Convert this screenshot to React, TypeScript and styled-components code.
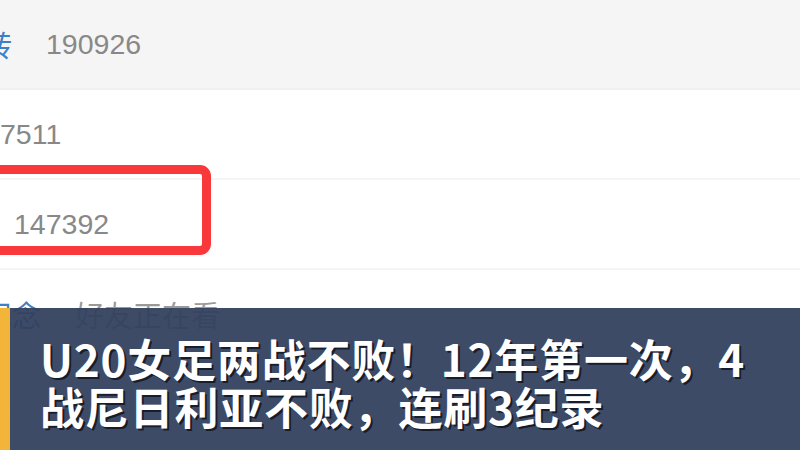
import styled, { createGlobalStyle } from "styled-components";

const GlobalStyle = createGlobalStyle`
  html, body {
    margin: 0;
    padding: 0;
    background: #ffffff;
    overflow: hidden;
  }
`;

const Screen = styled.div`
  position: relative;
  width: 800px;
  height: 450px;
  overflow: hidden;
  background: #ffffff;
  font-family: "Liberation Sans", "Noto Sans CJK SC", sans-serif;
`;

const List = styled.div`
  display: flex;
  flex-direction: column;
`;

const Row = styled.div<{ $shaded?: boolean; $indent: number }>`
  display: flex;
  align-items: center;
  gap: 34px;
  height: 88px;
  padding-left: ${({ $indent }) => $indent}px;
  background: ${({ $shaded }) => ($shaded ? "#f5f5f5" : "#ffffff")};
  border-bottom: 2px solid ${({ $shaded }) => ($shaded ? "#f0f0f0" : "#f5f5f5")};
`;

const Label = styled.span<{ $offset: number }>`
  margin-left: ${({ $offset }) => $offset}px;
  font-family: "Noto Sans CJK SC", sans-serif;
  font-size: 29px;
  color: #3f7fc4;
  white-space: nowrap;
`;

const Count = styled.span`
  font-family: "Liberation Sans", sans-serif;
  font-size: 28.5px;
  color: #888888;
`;

const Note = styled.span`
  font-family: "Noto Sans CJK SC", sans-serif;
  font-size: 29px;
  color: #9a9a9a;
`;

const Highlight = styled.div`
  position: absolute;
  left: -40px;
  top: 165px;
  width: 251px;
  height: 90px;
  box-sizing: border-box;
  border: 9px solid #f8383b;
  border-radius: 11px;
`;

const Caption = styled.div`
  position: absolute;
  left: 0;
  right: 0;
  top: 308px;
  bottom: 0;
  display: flex;
  background: rgba(50, 64, 94, 0.94);
`;

const Accent = styled.div`
  width: 10px;
  flex-shrink: 0;
  background: #f3b43a;
`;

const Headline = styled.h1`
  margin: 0;
  padding: 26px 40px 0 30px;
  font-family: "Noto Sans CJK SC", sans-serif;
  font-weight: 700;
  font-size: 44px;
  line-height: 48px;
  letter-spacing: 0.8px;
  color: #ffffff;
  text-shadow: 2px 2px 0 rgba(10, 14, 24, 0.75);
`;

export default function App() {
  return (
    <Screen>
      <GlobalStyle />
      <List>
        <Row $shaded $indent={0}>
          <Label $offset={-17}>转</Label>
          <Count>190926</Count>
        </Row>
        <Row $indent={-1}>
          <Count>7511</Count>
        </Row>
        <Row $indent={14}>
          <Count>147392</Count>
        </Row>
        <Row $indent={0}>
          <Label $offset={-17}>纪念</Label>
          <Note>好友正在看</Note>
        </Row>
        <Row $indent={0}>
          <Label $offset={-17}>零</Label>
        </Row>
      </List>
      <Highlight />
      <Caption>
        <Accent />
        <Headline>
          U20女足两战不败！12年第一次，4
          <br />
          战尼日利亚不败，连刷3纪录
        </Headline>
      </Caption>
    </Screen>
  );
}
